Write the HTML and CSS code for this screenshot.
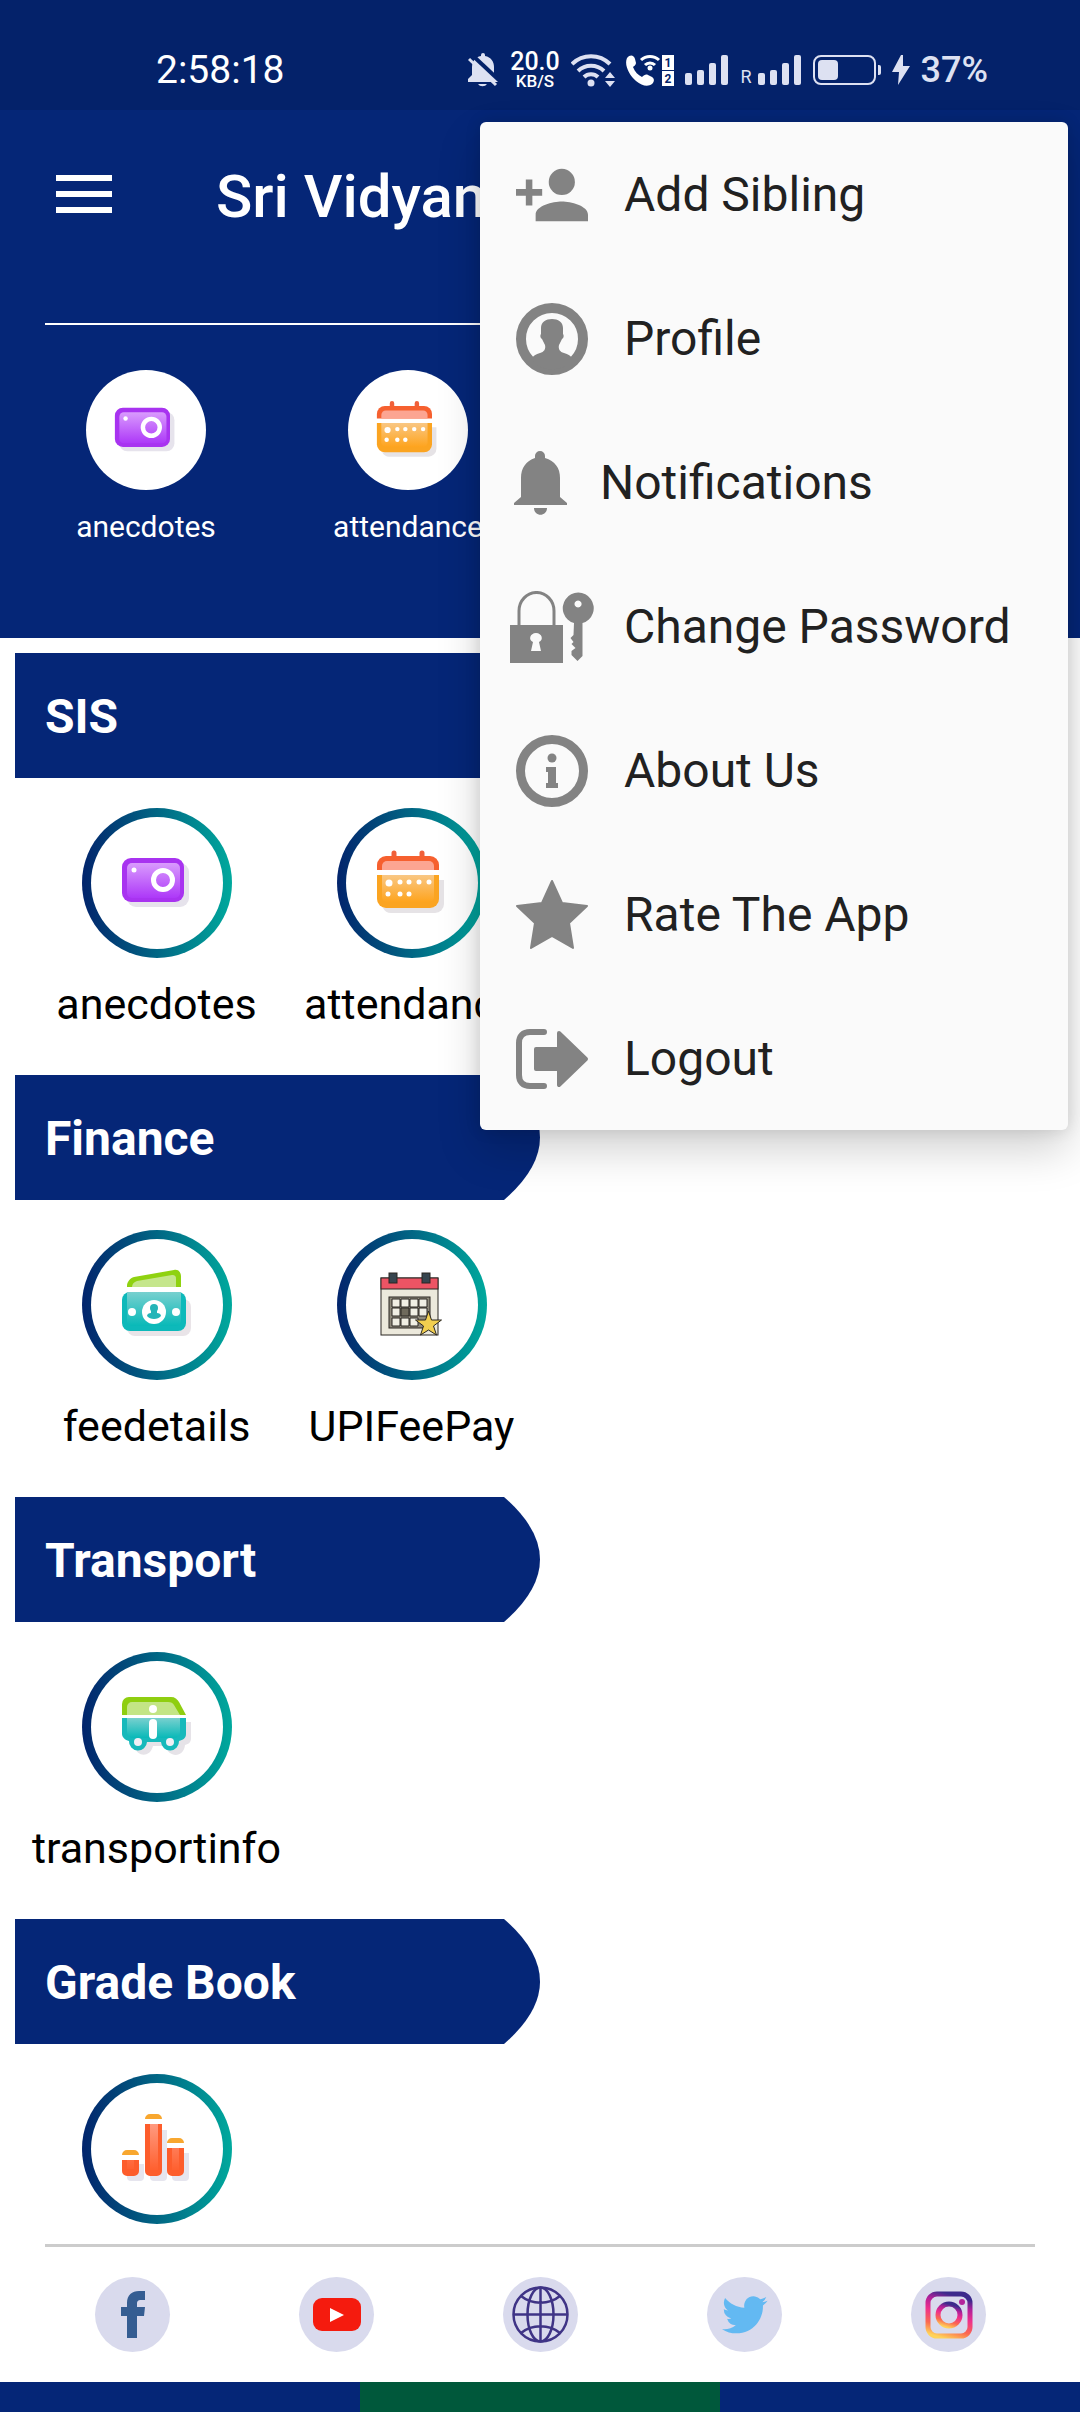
FILE: index.html
```html
<!DOCTYPE html>
<html lang="en">
<head>
    <meta charset="UTF-8">
    <meta name="viewport" content="width=device-width, initial-scale=1.0">
    <title>Sri Vidyan</title>
    <link rel="stylesheet" href="styles.css">
</head>
<body>
    <!-- Shared gradients and the icons that are used twice -->
    <svg class="defs" width="0" height="0" aria-hidden="true">
        <defs>
            <linearGradient id="purple" x1="0" y1="0" x2="0" y2="1">
                <stop offset="0" stop-color="#d99bfd"/>
                <stop offset="1" stop-color="#ad38f8"/>
            </linearGradient>
            <linearGradient id="orange" x1="0" y1="0" x2="0" y2="1">
                <stop offset="0" stop-color="#f9c784"/>
                <stop offset="1" stop-color="#fea41e"/>
            </linearGradient>
            <linearGradient id="teal" x1="0" y1="0" x2="0" y2="1">
                <stop offset="0" stop-color="#78d0cf"/>
                <stop offset="1" stop-color="#08b9b8"/>
            </linearGradient>
            <linearGradient id="red" x1="0" y1="0" x2="0" y2="1">
                <stop offset="0" stop-color="#ff9a80"/>
                <stop offset="1" stop-color="#ff602f"/>
            </linearGradient>
            <linearGradient id="insta" x1="0.2" y1="1" x2="0.5" y2="0">
                <stop offset="0" stop-color="#ffd35a"/>
                <stop offset="0.25" stop-color="#fb6a50"/>
                <stop offset="0.55" stop-color="#ee2f8c"/>
                <stop offset="0.8" stop-color="#b0209a"/>
                <stop offset="1" stop-color="#3c2a8c"/>
            </linearGradient>
            <symbol id="camera" viewBox="0 0 72 72">
                <rect x="6" y="16" width="62" height="44" rx="9" fill="#e6e3ec"/>
                <rect x="1" y="11" width="62" height="44" rx="9" fill="#a833f0"/>
                <rect x="6" y="16" width="53" height="35" rx="5" fill="url(#purple)"/>
                <circle cx="42" cy="33" r="9.500" fill="none" stroke="#fff" stroke-width="5"/>
                <circle cx="13" cy="23" r="2.500" fill="#fff"/>
            </symbol>
            <symbol id="calendar" viewBox="0 0 72 72">
                <path d="M63 33h5v24a9 9 0 0 1-9 9H15a9 9 0 0 1-8-5z" fill="#e6e3e6"/>
                <path d="M18 6v6M46 6v6" stroke="#f0603a" stroke-width="5" stroke-linecap="round"/>
                <path d="M1 23v-5a9 9 0 0 1 9-9h44a9 9 0 0 1 9 9v5z" fill="#f6602f"/>
                <path d="M6 23v-4a5 5 0 0 1 5-5h42a5 5 0 0 1 5 5v4z" fill="#fca592"/>
                <path d="M1 28h62v24a9 9 0 0 1-9 9H10a9 9 0 0 1-9-9z" fill="#fba421"/>
                <path d="M6 28h52v22a5 5 0 0 1-5 5H11a5 5 0 0 1-5-5z" fill="url(#orange)"/>
                <g fill="#fff">
                    <circle cx="13" cy="36" r="3.500"/>
                    <circle cx="24" cy="35" r="2.500"/>
                    <circle cx="33" cy="35" r="2.500"/>
                    <circle cx="43" cy="35" r="2.500"/>
                    <circle cx="53" cy="35" r="2.500"/>
                    <circle cx="12" cy="47" r="2.500"/>
                    <circle cx="24" cy="47" r="2.500"/>
                    <circle cx="33" cy="47" r="2.500"/>
                </g>
            </symbol>
            <symbol id="signal" viewBox="0 0 44 32">
                <rect x="0" y="19" width="7" height="12" rx="2"/>
                <rect x="12" y="16" width="7" height="15" rx="2"/>
                <rect x="24" y="9" width="7" height="22" rx="2"/>
                <rect x="36" y="1" width="7" height="30" rx="2"/>
            </symbol>
        </defs>
    </svg>

    <div class="app">
        <div class="status-bar">
            <span class="time">2:58:18</span>
            <div class="status-icons">
                <svg width="30" height="34" viewBox="0 0 30 34">
                    <path d="M13 3V2a2 2 0 0 1 4 0v1c6 1 9 6 9 11v8l4 4v3H0v-3l4-4v-8C4 9 7 4 13 3zM10 31h9a5 4 0 0 1-9 0z"/>
                    <path d="M2 0l31 29" stroke="#04226a" stroke-width="4"/>
                    <path d="M1 6l27 26" stroke="#dde1f2" stroke-width="3"/>
                </svg>
                <span class="speed"><span>20.0</span><small>KB/S</small></span>
                <svg width="44" height="34" viewBox="0 0 44 34">
                    <g fill="none" stroke="#dde1f2" stroke-width="4">
                        <path d="M1 11a27 27 0 0 1 38 0M7 18a19 19 0 0 1 26 0M13 24a10 10 0 0 1 14 0"/>
                    </g>
                    <circle cx="20" cy="30" r="3.500"/>
                    <path d="M34 25l5-6 5 6zM34 28l5 6 5-6z"/>
                </svg>
                <svg class="bright" width="48" height="34" viewBox="0 0 48 34">
                    <path d="M1 5c3-4 7-3 8 1l1 4c0 2-2 3-3 4 2 5 5 8 9 10 2-2 4-3 6-2l4 2c3 2 2 5 0 7-4 3-10 2-16-3C3 22-2 12 1 5z"/>
                    <g fill="none" stroke="#fff" stroke-width="3">
                        <path d="M15 7a13 13 0 0 1 18 0M19 12a7 7 0 0 1 10 0"/>
                    </g>
                    <circle cx="24" cy="15" r="2.500"/>
                    <rect x="36" y="2" width="12" height="15"/>
                    <rect x="36" y="18" width="12" height="15"/>
                    <text x="42" y="14" class="sim">1</text>
                    <text x="42" y="30" class="sim">2</text>
                </svg>
                <svg width="44" height="32"><use href="#signal"/></svg>
                <span class="roaming">R<svg width="44" height="32"><use href="#signal"/></svg></span>
                <svg width="68" height="32" viewBox="0 0 68 32">
                    <rect x="1" y="2" width="61" height="28" rx="7" fill="none" stroke="#dde1f2" stroke-width="2"/>
                    <rect x="5" y="6" width="20" height="20" rx="4"/>
                    <path d="M65 11h1a2 2 0 0 1 2 2v6a2 2 0 0 1-2 2h-1z"/>
                </svg>
                <svg width="18" height="32" viewBox="0 0 18 32">
                    <path d="M9 1L0 18h7L6 31 18 12h-7V1z"/>
                </svg>
                <span class="battery-text">37%</span>
            </div>
        </div>

        <header class="header">
            <div class="toolbar">
                <button class="menu-toggle" type="button" aria-label="Open navigation">
                    <span></span>
                    <span></span>
                    <span></span>
                </button>
                <h1>Sri Vidyan</h1>
            </div>
            <nav class="quick-links">
                <a href="#anecdotes" class="quick-link">
                    <span class="quick-circle"><svg width="64" height="64"><use href="#camera"/></svg></span>
                    anecdotes
                </a>
                <a href="#attendance" class="quick-link">
                    <span class="quick-circle"><svg width="64" height="64"><use href="#calendar"/></svg></span>
                    attendance
                </a>
            </nav>
        </header>

        <main class="content">
            <section class="section">
                <div class="banner">
                    <h2>SIS</h2>
                    <svg width="36" height="125" viewBox="0 0 36 125"><path d="M0 0Q72 62.500 0 125z"/></svg>
                </div>
                <div class="tiles">
                    <a href="#anecdotes" class="tile">
                        <span class="ring"><span class="ring-inner"><svg width="72" height="72"><use href="#camera"/></svg></span></span>
                        anecdotes
                    </a>
                    <a href="#attendance" class="tile">
                        <span class="ring"><span class="ring-inner"><svg width="72" height="72"><use href="#calendar"/></svg></span></span>
                        attendance
                    </a>
                </div>
            </section>

            <section class="section">
                <div class="banner">
                    <h2>Finance</h2>
                    <svg width="36" height="125" viewBox="0 0 36 125"><path d="M0 0Q72 62.500 0 125z"/></svg>
                </div>
                <div class="tiles">
                    <a href="#feedetails" class="tile">
                        <span class="ring"><span class="ring-inner">
                            <svg width="72" height="72" viewBox="0 0 72 72">
                                <rect x="6" y="30" width="64" height="37" rx="8" fill="#e9e4e8"/>
                                <path d="M6 18v-1c0-4 3-8 7-9l40-7c4-1 7 2 7 6v11z" fill="#8fd210"/>
                                <path d="M11 18c0-3 2-5 5-6l35-6c3 0 4 1 4 4v8z" fill="#c5e68c"/>
                                <rect x="1" y="23" width="64" height="39" rx="8" fill="#0db9ba"/>
                                <path d="M6 23h54v29a5 5 0 0 1-5 5H11a5 5 0 0 1-5-5z" fill="url(#teal)"/>
                                <circle cx="33" cy="43" r="12" fill="#fff"/>
                                <circle cx="11" cy="43" r="4" fill="#fff"/>
                                <circle cx="55" cy="43" r="4" fill="#fff"/>
                                <circle cx="33" cy="39" r="4" fill="#24b5b8"/>
                                <path d="M30 41h6v3c2 0 4 1 4 3-3 4-11 4-14 0 0-2 2-3 4-3z" fill="#24b5b8"/>
                            </svg>
                        </span></span>
                        feedetails
                    </a>
                    <a href="#upifeepay" class="tile">
                        <span class="ring"><span class="ring-inner">
                            <svg width="72" height="72" viewBox="0 0 72 72" stroke="#2b2722" stroke-width="1">
                                <rect x="5" y="9" width="57" height="57" fill="#ece9dc"/>
                                <rect x="5" y="9" width="57" height="11" fill="#ed5464"/>
                                <rect x="13" y="4" width="8" height="10" fill="#37454f"/>
                                <rect x="46" y="4" width="8" height="10" fill="#37454f"/>
                                <rect x="13" y="28" width="41" height="31" fill="#8f8a7c"/>
                                <path d="M16 30h8v8h-8zM25 30h8v8h-8zM34 30h8v8h-8zM43 30h8v8h-8zM16 39h8v8h-8zM34 39h8v8h-8zM43 39h8v8h-8zM16 49h8v8h-8zM25 49h8v8h-8zM34 49h8v8h-8z" fill="#f1efe4"/>
                                <rect x="25" y="39" width="8" height="8" fill="#6f6a5c"/>
                                <path d="M52.500 42l3 9 10 0-8 6 3 9-8-5-8 5 3-9-8-6 10 0z" fill="#f2cf4f"/>
                            </svg>
                        </span></span>
                        UPIFeePay
                    </a>
                </div>
            </section>

            <section class="section">
                <div class="banner">
                    <h2>Transport</h2>
                    <svg width="36" height="125" viewBox="0 0 36 125"><path d="M0 0Q72 62.500 0 125z"/></svg>
                </div>
                <div class="tiles">
                    <a href="#transportinfo" class="tile">
                        <span class="ring"><span class="ring-inner">
                            <svg width="72" height="72" viewBox="0 0 72 72">
                                <path d="M65 31h5v16c0 4-2 6-6 7-1 13-17 13-19 1H32c-3 12-16 11-18 1z" fill="#e6e3e8"/>
                                <path d="M1 24V13a7 7 0 0 1 7-7h42c4 0 6 2 8 5l7 13z" fill="#8fce10"/>
                                <path d="M6 24V16a5 5 0 0 1 5-5h36c3 0 5 1 6 3l6 10z" fill="#c3e585"/>
                                <path d="M1 27h64v16c0 4-3 6-7 7a9 9 0 0 1-18 1H26a9 9 0 0 1-18-1c-4-1-7-4-7-7z" fill="#17b9bb"/>
                                <path d="M6 27h53v13c0 4-2 7-6 7H12c-4 0-6-3-6-7z" fill="url(#teal)"/>
                                <circle cx="17" cy="51" r="4" fill="#f1eff5"/>
                                <circle cx="49" cy="51" r="4" fill="#f1eff5"/>
                                <circle cx="32" cy="18" r="4" fill="#fff"/>
                                <rect x="28" y="28" width="8" height="20" rx="4" fill="#fff"/>
                            </svg>
                        </span></span>
                        transportinfo
                    </a>
                </div>
            </section>

            <section class="section">
                <div class="banner">
                    <h2>Grade Book</h2>
                    <svg width="36" height="125" viewBox="0 0 36 125"><path d="M0 0Q72 62.500 0 125z"/></svg>
                </div>
                <div class="tiles">
                    <a href="#gradebook" class="tile" aria-label="Grade Book">
                        <span class="ring"><span class="ring-inner">
                            <svg width="72" height="72" viewBox="0 0 72 72">
                                <path d="M6 51h17v13a4 4 0 0 1-4 4h-9a4 4 0 0 1-4-4zM29 17h17v47a4 4 0 0 1-4 4h-9a4 4 0 0 1-4-4zM51 40h17v24a4 4 0 0 1-4 4h-9a4 4 0 0 1-4-4z" fill="#e6e5ee"/>
                                <path d="M1 42a5 5 0 0 1 5-5h7a5 5 0 0 1 5 5zM24 6a5 5 0 0 1 5-5h7a5 5 0 0 1 5 5zM46 30a5 5 0 0 1 5-5h7a5 5 0 0 1 5 5z" fill="#f8a72f"/>
                                <path d="M1 42h17v5H1zM24 6h17v5H24zM46 30h17v5H46z" fill="#fff"/>
                                <path d="M1 47h17v11a5 5 0 0 1-5 5H6a5 5 0 0 1-5-5zM24 11h17v47a5 5 0 0 1-5 5h-7a5 5 0 0 1-5-5zM46 35h17v23a5 5 0 0 1-5 5h-7a5 5 0 0 1-5-5z" fill="#fd5d2c"/>
                                <path d="M6 47h7v9H6zM29 11h8v46h-8zM51 35h7v22h-7z" fill="url(#red)"/>
                            </svg>
                        </span></span>
                    </a>
                </div>
            </section>
        </main>

        <footer class="footer">
            <hr>
            <div class="social">
                <a href="#facebook" aria-label="Facebook">
                    <svg width="75" height="75" viewBox="0 0 75 75">
                        <path d="M32 61V39h-6v-9h6v-4c0-8 5-12 12-12h6v9h-4c-3 0-4 1-4 4v3h8l-1 9h-7v22z" fill="#355d92"/>
                    </svg>
                </a>
                <a href="#youtube" aria-label="YouTube">
                    <svg width="75" height="75" viewBox="0 0 75 75">
                        <rect x="14" y="21" width="48" height="33" rx="9" fill="#f51b0e"/>
                        <path d="M31 31l14 7-14 7z" fill="#fff"/>
                    </svg>
                </a>
                <a href="#website" aria-label="Website">
                    <svg width="75" height="75" viewBox="0 0 75 75" fill="none" stroke="#3f3486" stroke-width="2.500">
                        <circle cx="37.500" cy="37.500" r="27"/>
                        <ellipse cx="37.500" cy="37.500" rx="13" ry="27"/>
                        <path d="M37.500 10v55M10 37.500h55M18 19c11 9 28 9 39 0M18 56c11-9 28-9 39 0"/>
                    </svg>
                </a>
                <a href="#twitter" aria-label="Twitter">
                    <svg width="75" height="75" viewBox="0 0 75 75">
                        <path transform="translate(15 15) scale(1.900)" d="M23.953 4.570a10 10 0 0 1-2.825.775 4.958 4.958 0 0 0 2.163-2.723c-.951.555-2.005.959-3.127 1.184a4.920 4.920 0 0 0-8.384 4.482C7.690 8.095 4.067 6.130 1.640 3.162a4.822 4.822 0 0 0-.666 2.475c0 1.710.870 3.213 2.188 4.096a4.904 4.904 0 0 1-2.228-.616v.060a4.923 4.923 0 0 0 3.946 4.827 4.996 4.996 0 0 1-2.212.085 4.936 4.936 0 0 0 4.604 3.417 9.867 9.867 0 0 1-6.102 2.105c-.390 0-.779-.023-1.170-.067a13.995 13.995 0 0 0 7.557 2.209c9.053 0 13.998-7.496 13.998-13.985 0-.210 0-.420-.015-.630A9.935 9.935 0 0 0 24 4.590z" fill="#63b9f2"/>
                    </svg>
                </a>
                <a href="#instagram" aria-label="Instagram">
                    <svg width="75" height="75" viewBox="0 0 75 75">
                        <g fill="none" stroke="url(#insta)" stroke-width="5">
                            <rect x="17" y="17" width="42" height="42" rx="9"/>
                            <circle cx="38" cy="38" r="11"/>
                        </g>
                        <circle cx="51" cy="25" r="3" fill="#b3259b"/>
                    </svg>
                </a>
            </div>
            <div class="strip">
                <span></span>
                <span></span>
                <span></span>
            </div>
        </footer>

        <!-- Overflow menu, lies over the page -->
        <div class="popup-menu" role="menu">
            <button type="button" role="menuitem">
                <svg width="84" height="72" viewBox="-0.833 1 25.667 22">
                    <circle cx="15" cy="8" r="4"/>
                    <path d="M15 14c-2.700 0-8 1.300-8 4v2h16v-2c0-2.700-5.300-4-8-4zM6 10.200V7.300H4v2.900H1v2h3v3h2v-3h3v-2z"/>
                </svg>
                Add Sibling
            </button>
            <button type="button" role="menuitem">
                <svg width="84" height="72" viewBox="0 0 84 72">
                    <circle cx="42" cy="36" r="31" fill="none" stroke="#838383" stroke-width="10"/>
                    <path d="M31 25c0-6 5-9 11-9s11 3 11 9v6c1 1 1 4-1 5l-3 6c-1 4 1 7 5 8 4 1 7 3 9 6-11 14-31 14-42 0 2-3 5-5 9-6 4-1 6-4 5-8l-3-6c-2-1-2-4-1-5z"/>
                </svg>
                Profile
            </button>
            <button type="button" role="menuitem">
                <svg width="60" height="72" viewBox="0 0 60 72">
                    <path d="M25 11V9a5 5 0 0 1 10 0v2c10 3 15 10 15 20v19l7 6v2H4v-2l7-6V31c0-10 5-17 14-20zM24 61h13c0 9-13 9-13 0z"/>
                </svg>
                Notifications
            </button>
            <button type="button" role="menuitem">
                <svg width="84" height="72" viewBox="0 0 84 72">
                    <path d="M9 35V20a17 18 0 0 1 35 0v15" fill="none" stroke="#838383" stroke-width="3"/>
                    <path fill-rule="evenodd" d="M0 34h53v38H0zM23 51l-2 9h10l-2-9c5-2 3-9-3-9s-8 7-3 9z"/>
                    <path fill-rule="evenodd" d="M64 32a15.500 15.500 0 1 1 8.500 0v33l-5 5-6-6v-4l4-3-4-4 2-2-3-4 3-3zM68 9.500a3.500 3.500 0 1 0 .1 0z"/>
                </svg>
                Change Password
            </button>
            <button type="button" role="menuitem">
                <svg width="84" height="72" viewBox="0 0 84 72">
                    <circle cx="42" cy="36" r="31.500" fill="none" stroke="#838383" stroke-width="9"/>
                    <circle cx="42" cy="23" r="4.500"/>
                    <path d="M36 32h10v16h2v5H36v-5h2V37h-2z"/>
                </svg>
                About Us
            </button>
            <button type="button" role="menuitem">
                <svg width="84" height="72" viewBox="0 0 84 72">
                    <path d="M42 2l10 22 25 3-18 17 4 25-21-12-21 12 4-25L7 27l25-3z" stroke="#838383" stroke-width="2" stroke-linejoin="round"/>
                </svg>
                Rate The App
            </button>
            <button type="button" role="menuitem">
                <svg width="84" height="72" viewBox="0 0 84 72">
                    <path d="M34 9H20C13 9 9 13 9 20v32c0 7 4 11 11 11h14" fill="none" stroke="#838383" stroke-width="6" stroke-linecap="round"/>
                    <path d="M49 10l27 26-27 26V46H26V26h23z" stroke="#838383" stroke-width="4" stroke-linejoin="round"/>
                </svg>
                Logout
            </button>
        </div>
    </div>
</body>
</html>
```
FILE: styles.css
```css
* {
    margin: 0;
    padding: 0;
    box-sizing: border-box;
}

body {
    font-family: Roboto, "Noto Sans", sans-serif;
    background: #fff;
    color: #000;
}

a {
    color: inherit;
    text-decoration: none;
}

button {
    font: inherit;
    color: inherit;
    background: none;
    border: none;
    cursor: pointer;
}

svg {
    display: block;
    flex: none;
}

.defs {
    position: absolute;
}

.app {
    position: relative;
    display: flex;
    flex-direction: column;
    min-height: 100vh;
    overflow: hidden;
}

/* Status bar */
.status-bar {
    display: flex;
    justify-content: space-between;
    padding: 28px 92px 0 156px;
    height: 110px;
    background: #04226a;
    color: #fff;
}

.time {
    font-size: 39px;
    line-height: 84px;
}

.status-icons {
    display: flex;
    align-items: center;
    gap: 11px;
    height: 84px;
    fill: #dde1f2;
    color: #dde1f2;
}

.bright {
    fill: #fff;
}

.speed {
    display: flex;
    flex-direction: column;
    align-items: center;
    width: 51px;
    color: #fff;
    font-size: 25px;
    font-weight: 500;
    line-height: 22px;
}

.speed small {
    font-size: 17px;
    line-height: 17px;
}

.sim {
    fill: #04226a;
    font-size: 12px;
    font-weight: 700;
    text-anchor: middle;
}

.roaming {
    display: flex;
    align-items: flex-end;
    gap: 6px;
    font-size: 18px;
    line-height: 18px;
}

.battery-text {
    font-size: 36px;
    font-weight: 500;
}

/* Header */
.header {
    padding-bottom: 94px;
    background: #052677;
    color: #fff;
}

.toolbar {
    display: flex;
    align-items: center;
    gap: 104px;
    height: 168px;
    padding: 0 56px;
}

.menu-toggle {
    display: flex;
    flex-direction: column;
    gap: 10px;
    width: 56px;
}

.menu-toggle span {
    height: 6px;
    background: #fff;
}

.toolbar h1 {
    padding-top: 4px;
    font-size: 60px;
    font-weight: 500;
}

.quick-links {
    display: flex;
    margin: 45px 45px 0;
    padding-top: 45px;
    border-top: 2px solid #fff;
}

.quick-link {
    display: flex;
    flex-direction: column;
    align-items: center;
    gap: 19px;
    width: 202px;
    margin-right: 60px;
    font-size: 30px;
    line-height: 35px;
}

.quick-circle {
    display: flex;
    align-items: center;
    justify-content: center;
    width: 120px;
    height: 120px;
    border-radius: 50%;
    background: #fff;
}

/* Sections */
.content {
    flex: 1;
    padding: 15px 15px 0;
}

.section {
    padding-bottom: 46px;
}

.section:last-child {
    padding-bottom: 20px;
}

.banner {
    display: flex;
    width: 50%;
    fill: #052677;
}

.banner h2 {
    flex: 1;
    padding: 2px 0 0 30px;
    background: #052677;
    color: #fff;
    font-size: 48px;
    font-weight: 700;
    line-height: 123px;
}

.tiles {
    display: flex;
    padding: 30px 14px 0;
}

.tile {
    display: flex;
    flex-direction: column;
    align-items: center;
    gap: 21px;
    width: 255px;
    font-size: 43px;
    line-height: 50px;
}

.ring {
    width: 150px;
    height: 150px;
    padding: 9px;
    border-radius: 50%;
    background: linear-gradient(90deg, #02246c, #00a99d);
}

.ring-inner {
    display: flex;
    align-items: center;
    justify-content: center;
    height: 100%;
    border-radius: 50%;
    background: #fff;
}

/* Footer */
.footer hr {
    margin: 0 45px;
    border: none;
    border-top: 3px solid #ccc;
}

.social {
    display: flex;
    justify-content: space-around;
    padding: 30px;
}

.social a {
    border-radius: 50%;
    background: #d9daed;
}

.strip {
    display: flex;
    height: 30px;
}

.strip span {
    flex: 1;
    background: #052677;
}

.strip span:nth-child(2) {
    background: #00583b;
}

/* Popup menu */
.popup-menu {
    position: absolute;
    top: 122px;
    right: 12px;
    width: 588px;
    border-radius: 6px;
    background: #fafafa;
    box-shadow: 0 20px 44px rgba(0, 0, 0, 0.18), 0 0 16px rgba(0, 0, 0, 0.12);
}

.popup-menu button {
    display: flex;
    align-items: center;
    gap: 30px;
    width: 100%;
    height: 144px;
    padding: 1px 30px 0;
    color: #212121;
    fill: #838383;
    font-size: 48px;
    text-align: left;
}
```
